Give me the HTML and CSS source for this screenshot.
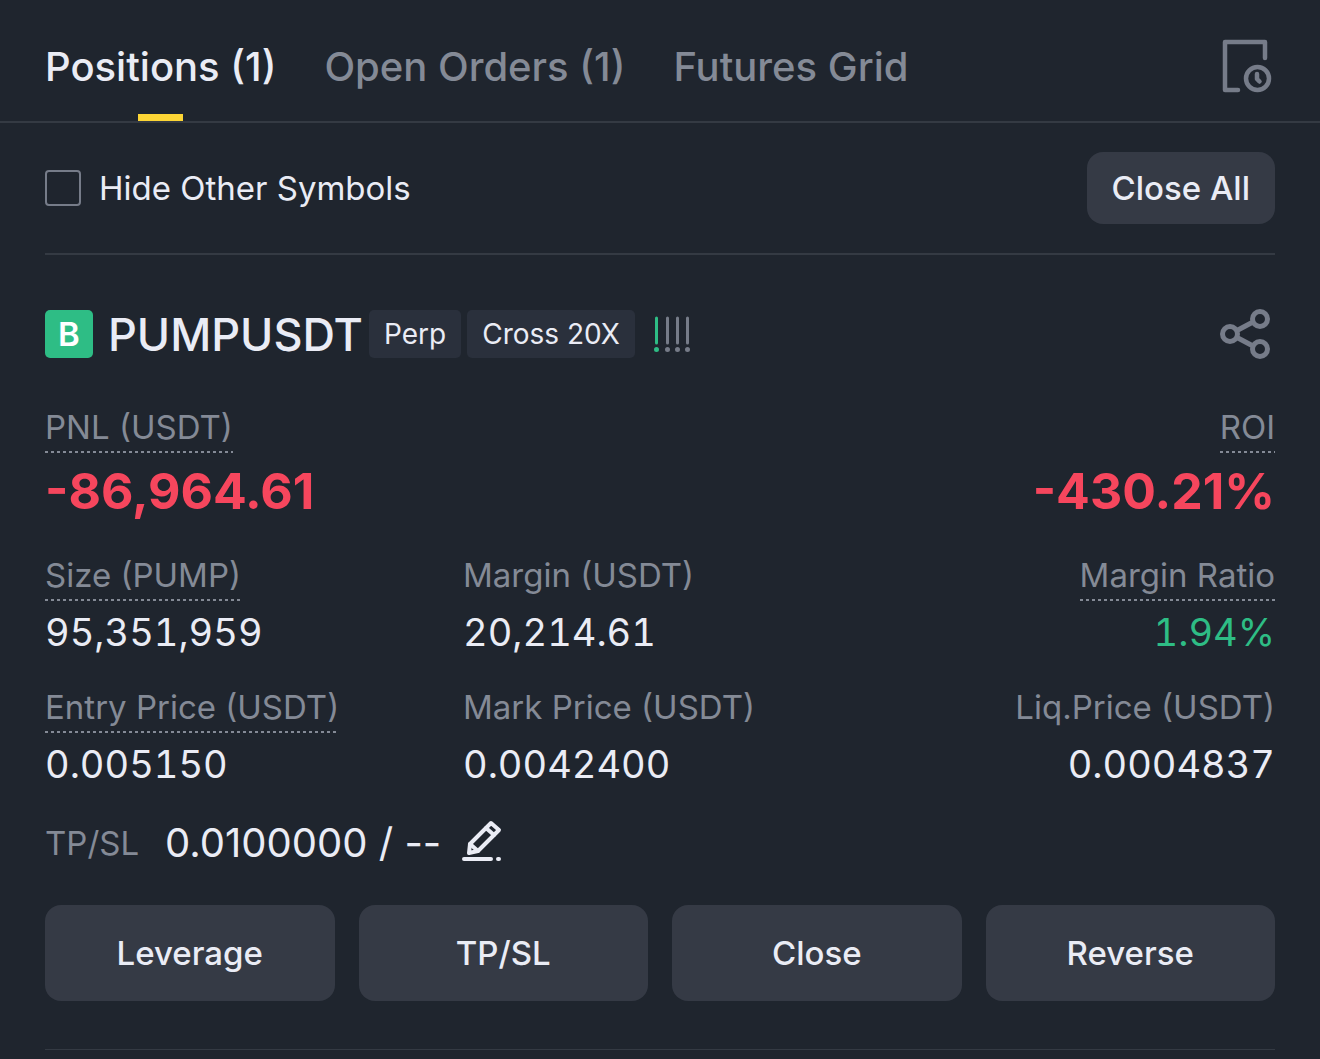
FILE: index.html
```html
<!DOCTYPE html>
<html lang="en">
<head>
    <meta charset="UTF-8">
    <meta name="viewport" content="width=device-width, initial-scale=1.0">
    <title>Positions</title>
    <link rel="stylesheet" href="styles.css">
</head>
<body>
    <header class="header">
        <nav class="tabs">
            <button class="tab active">Positions (1)</button>
            <button class="tab">Open Orders (1)</button>
            <button class="tab">Futures Grid</button>
        </nav>
        <button class="icon-button history" aria-label="Order history">
            <svg width="54" height="56" viewBox="0 0 54 56" fill="none" stroke="currentColor" stroke-width="4.500" stroke-linecap="round" stroke-linejoin="round">
                <path d="M17 52H4V4H44V20"/>
                <circle cx="36.500" cy="40.500" r="11.500"/>
                <path d="M36 36V41L38.500 43.500"/>
            </svg>
        </button>
    </header>

    <main class="container">
        <div class="toolbar">
            <label class="hide-others" for="hideOthers">
                <input type="checkbox" id="hideOthers">
                Hide Other Symbols
            </label>
            <button class="button close-all">Close All</button>
        </div>

        <section class="position">
            <div class="symbol-row">
                <span class="side">B</span>
                <h2>PUMPUSDT</h2>
                <span class="tag">Perp</span>
                <span class="tag">Cross 20X</span>
                <svg class="risk" width="38" height="38" viewBox="0 0 38 38" stroke-width="3" stroke-linecap="round">
                    <g stroke="#2ebd85" fill="#2ebd85">
                        <path d="M3.500 3V28"/>
                        <circle cx="3.500" cy="34.500" r="1"/>
                    </g>
                    <g stroke="#767c89" fill="#767c89">
                        <path d="M14.500 3V28M24.500 3V28M34.500 3V28"/>
                        <circle cx="14.500" cy="34.500" r="1"/>
                        <circle cx="24.500" cy="34.500" r="1"/>
                        <circle cx="34.500" cy="34.500" r="1"/>
                    </g>
                </svg>
                <button class="icon-button share" aria-label="Share">
                    <svg width="56" height="54" viewBox="0 0 56 54" fill="none" stroke="currentColor" stroke-width="5">
                        <circle cx="11" cy="27" r="7.500"/>
                        <circle cx="41" cy="12" r="7.500"/>
                        <circle cx="41" cy="42" r="7.500"/>
                        <path d="M18 23.500L34 15M18 30.500L34 39"/>
                    </svg>
                </button>
            </div>

            <dl class="summary">
                <div class="stat">
                    <dt><span class="hint">PNL (USDT)</span></dt>
                    <dd class="big loss">-86,964.61</dd>
                </div>
                <div class="stat right">
                    <dt><span class="hint">ROI</span></dt>
                    <dd class="big loss">-430.21%</dd>
                </div>
            </dl>

            <dl class="details">
                <div class="stat">
                    <dt><span class="hint">Size (PUMP)</span></dt>
                    <dd>95,351,959</dd>
                </div>
                <div class="stat">
                    <dt><span>Margin (USDT)</span></dt>
                    <dd>20,214.61</dd>
                </div>
                <div class="stat right">
                    <dt><span class="hint">Margin Ratio</span></dt>
                    <dd class="gain">1.94%</dd>
                </div>
                <div class="stat">
                    <dt><span class="hint">Entry Price (USDT)</span></dt>
                    <dd>0.005150</dd>
                </div>
                <div class="stat">
                    <dt><span>Mark Price (USDT)</span></dt>
                    <dd>0.0042400</dd>
                </div>
                <div class="stat right">
                    <dt><span>Liq.Price (USDT)</span></dt>
                    <dd>0.0004837</dd>
                </div>
            </dl>

            <div class="tpsl">
                <span class="tpsl-label">TP/SL</span>
                <span class="tpsl-value">0.0100000 / --</span>
                <button class="icon-button edit" aria-label="Edit TP/SL">
                    <svg width="42" height="48" viewBox="0 0 42 48" fill="none" stroke="currentColor" stroke-width="4" stroke-linecap="round" stroke-linejoin="round">
                        <path d="M8 34L9 25L30 4L38 11L17 32Z"/>
                        <path d="M25 9L33 16M9 25L17 32"/>
                        <path d="M3 40H30M37 40H38"/>
                    </svg>
                </button>
            </div>

            <div class="actions">
                <button class="button">Leverage</button>
                <button class="button">TP/SL</button>
                <button class="button">Close</button>
                <button class="button">Reverse</button>
            </div>
        </section>
    </main>
</body>
</html>
```

FILE: styles.css
```css
* {
    box-sizing: border-box;
}
body {
    margin: 0;
    background-color: #1f252e;
    color: #eaecf5;
    font-family: Inter, "Liberation Sans", sans-serif;
    font-size: 33px;
}
button {
    padding: 0;
    border: none;
    background: none;
    color: inherit;
    font: inherit;
    cursor: pointer;
}
svg {
    display: block;
}

/* tabs */
.header {
    display: flex;
    justify-content: space-between;
    align-items: center;
    padding: 0 45px;
    border-bottom: 2px solid #343a43;
}
.tabs {
    display: flex;
    gap: 48px;
}
.tab {
    position: relative;
    height: 121px;
    padding-top: 12px;
    color: #848a96;
    font-size: 40px;
    font-weight: 500;
    white-space: nowrap;
}
.tab.active {
    color: #eaecf5;
}
.tab.active::after {
    content: "";
    position: absolute;
    left: 50%;
    bottom: 0;
    width: 45px;
    height: 7px;
    margin-left: -23px;
    background-color: #fcd535;
}
.icon-button {
    color: #767c89;
}
.history {
    padding-top: 10px;
}

.container {
    padding: 0 45px;
}
.toolbar {
    display: flex;
    justify-content: space-between;
    align-items: center;
    height: 132px;
    border-bottom: 2px solid #343a43;
}
.hide-others {
    display: flex;
    align-items: center;
    gap: 18px;
}
.hide-others input {
    appearance: none;
    width: 36px;
    height: 36px;
    margin: 0;
    border: 2px solid #767c89;
    border-radius: 4px;
}
.hide-others input:checked {
    background-color: #fcd535;
}
.button {
    height: 96px;
    border-radius: 16px;
    background-color: #353a45;
    font-weight: 500;
}
.close-all {
    height: 72px;
    padding: 0 25px;
}

/* position card */
.position {
    padding: 55px 0 48px;
    border-bottom: 1px solid #343a43;
}
.symbol-row {
    display: flex;
    align-items: center;
    height: 48px;
}
.side {
    width: 48px;
    border-radius: 5px;
    background-color: #2ebd85;
    color: #fff;
    font-size: 33px;
    font-weight: 600;
    line-height: 48px;
    text-align: center;
}
h2 {
    margin: 0 6px 0 15px;
    font-size: 45px;
    font-weight: 500;
}
.tag {
    margin-right: 6px;
    padding: 0 15px;
    border-radius: 5px;
    background-color: #2a303c;
    font-size: 28px;
    line-height: 48px;
    white-space: nowrap;
}
.risk {
    margin-left: 12px;
}
.share {
    margin-left: auto;
}
dl {
    margin: 0;
}
dd {
    margin: 8px 0 0;
    font-size: 38px;
    font-variant-numeric: tabular-nums;
    line-height: 46px;
}
.summary {
    display: flex;
    justify-content: space-between;
    margin-top: 51px;
}
.details {
    display: grid;
    grid-template-columns: repeat(3, 1fr);
    gap: 34px 24px;
    margin-top: 36px;
}
.right {
    text-align: right;
}
dt {
    display: flex;
    color: #848a96;
    line-height: 36px;
    white-space: nowrap;
}
.right dt {
    justify-content: flex-end;
}
dt span {
    padding-bottom: 8px;
}
/* dashed underline, 3px on and 3px off */
dt .hint {
    background: repeating-linear-gradient(to right, #848a96 0 3px, transparent 3px 6px) left bottom / 100% 2px no-repeat;
}
.big {
    font-size: 50px;
    font-variant-numeric: normal;
    font-weight: 700;
    line-height: 60px;
}
.loss {
    color: #f6465d;
}
.gain {
    color: #2ebd85;
}
.tpsl {
    display: flex;
    align-items: center;
    margin-top: 32px;
    line-height: 48px;
}
.tpsl-label {
    color: #848a96;
}
.tpsl-value {
    margin: 0 20px 0 26px;
    font-size: 40px;
}
.edit {
    color: #eaecf5;
}
.actions {
    display: grid;
    grid-template-columns: repeat(4, 1fr);
    gap: 24px;
    margin-top: 38px;
}
```
